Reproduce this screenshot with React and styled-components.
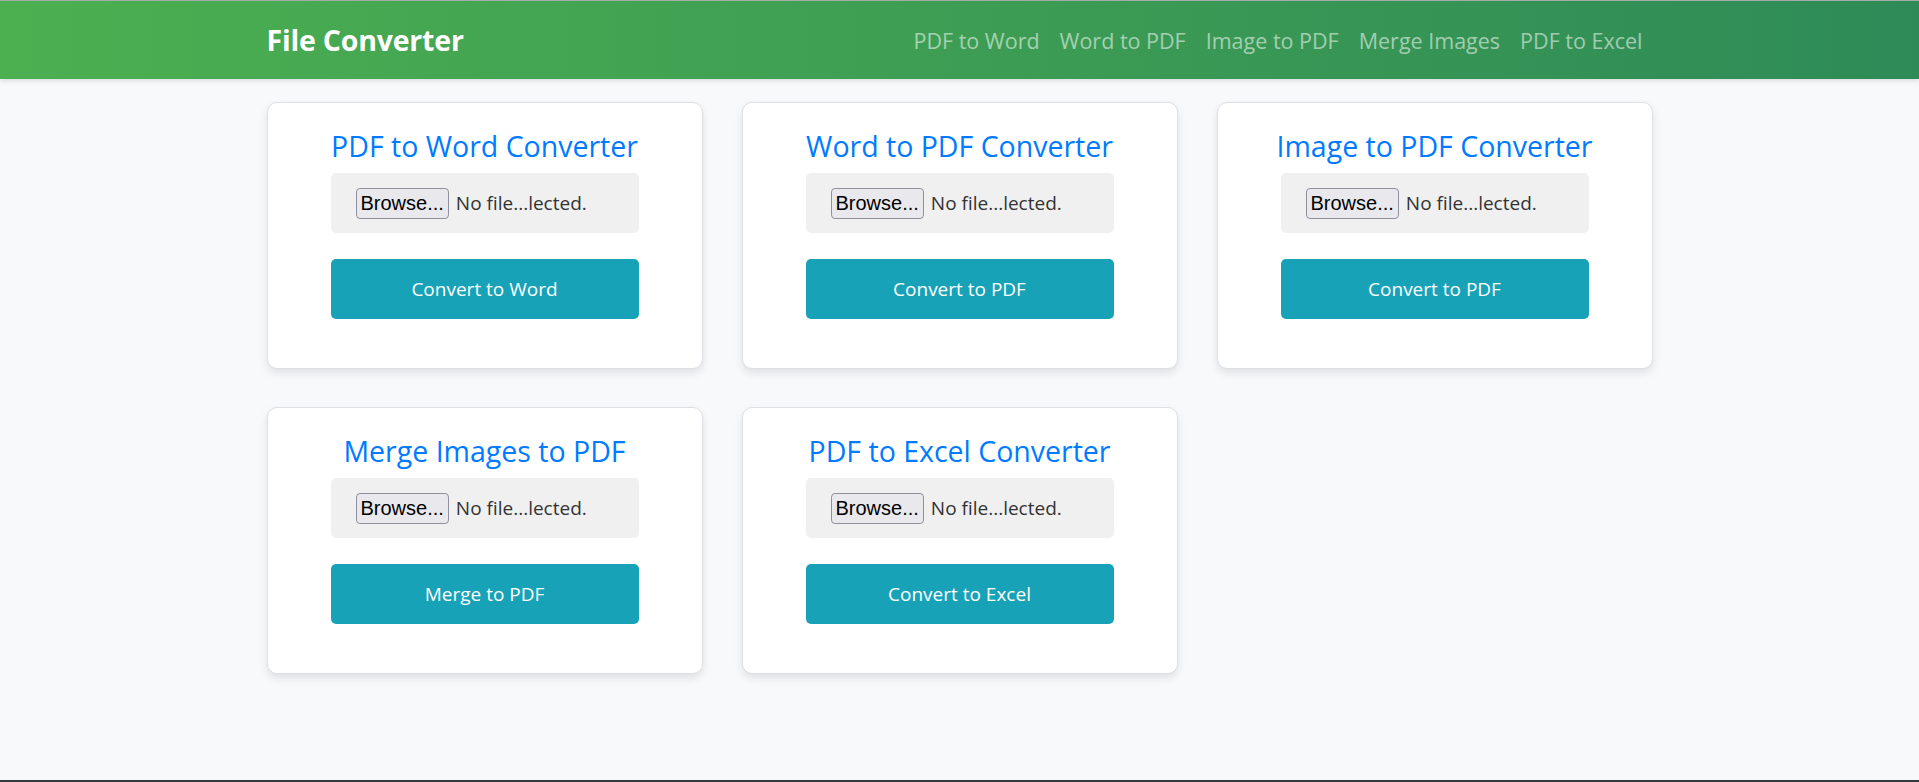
import React from "react";
import styled, { createGlobalStyle } from "styled-components";

const GlobalStyle = createGlobalStyle`
  body {
    margin: 0;
    background-color: #f8f9fa;
    font-family: "Open Sans", "Noto Sans", sans-serif;
    color: #212529;
  }
`;

const Header = styled.header`
  height: 78px;
  border-top: 1px solid #a9a9a9;
  background: linear-gradient(90deg, #4caf50, #2e8b57);
  box-shadow: 0 2px 5px rgba(0, 0, 0, 0.12);
  display: flex;
  justify-content: center;
`;

const HeaderInner = styled.div`
  width: 1386px;
  display: flex;
  justify-content: space-between;
  align-items: center;
`;

const Brand = styled.a`
  color: #fff;
  font-size: 28.5px;
  font-weight: 700;
  text-decoration: none;
  letter-spacing: -0.2px;
`;

const NavItems = styled.nav`
  display: flex;
  align-items: center;
`;

const NavLink = styled.a`
  color: rgba(255, 255, 255, 0.55);
  font-size: 21.5px;
  padding: 8px 10px;
  text-decoration: none;
`;

const Main = styled.main`
  width: 1386px;
  margin: 0 auto;
  padding: 23px 0 106px;
`;

const Grid = styled.div`
  display: grid;
  grid-template-columns: repeat(3, 436px);
  column-gap: 39px;
  row-gap: 38px;
`;

const Card = styled.section`
  box-sizing: border-box;
  height: 267px;
  background: #fff;
  border: 1px solid #dcdfe3;
  border-radius: 10px;
  box-shadow: 0 4px 8px rgba(0, 0, 0, 0.1);
  padding: 26px 63px 0;
  display: flex;
  flex-direction: column;
  align-items: center;
`;

const Title = styled.h3`
  margin: 0 0 10px;
  font-size: 28.5px;
  font-weight: 400;
  line-height: 1.2;
  color: #007bff;
  white-space: nowrap;
`;

const FileBox = styled.div`
  box-sizing: border-box;
  width: 100%;
  height: 60px;
  flex-shrink: 0;
  background: #f0f0f0;
  border-radius: 5px;
  display: flex;
  align-items: center;
  padding-left: 25px;
  gap: 7px;
`;

const BrowseButton = styled.button`
  height: 31px;
  padding: 0 4px;
  background: #e9e9ed;
  border: 1px solid #8f8f9d;
  border-radius: 4px;
  font-family: "Liberation Sans", Arial, sans-serif;
  font-size: 20px;
  color: #000;
`;

const FileName = styled.span`
  font-size: 19px;
  color: #333;
`;

const ActionButton = styled.button`
  width: 100%;
  height: 60px;
  flex-shrink: 0;
  margin-top: 26px;
  background: #17a2b8;
  border: none;
  border-radius: 5px;
  color: #fff;
  font-family: "Open Sans", "Noto Sans", sans-serif;
  font-size: 19px;
`;

const Footer = styled.footer`
  height: 60px;
  background: #343a40;
`;

const converters = [
  { title: "PDF to Word Converter", action: "Convert to Word" },
  { title: "Word to PDF Converter", action: "Convert to PDF" },
  { title: "Image to PDF Converter", action: "Convert to PDF" },
  { title: "Merge Images to PDF", action: "Merge to PDF" },
  { title: "PDF to Excel Converter", action: "Convert to Excel" },
];

const links = ["PDF to Word", "Word to PDF", "Image to PDF", "Merge Images", "PDF to Excel"];

const App = () => {
  return (
    <>
      <GlobalStyle />
      <Header>
        <HeaderInner>
          <Brand href="#">File Converter</Brand>
          <NavItems>
            {links.map((l) => (
              <NavLink key={l} href="#">
                {l}
              </NavLink>
            ))}
          </NavItems>
        </HeaderInner>
      </Header>
      <Main>
        <Grid>
          {converters.map((c) => (
            <Card key={c.title}>
              <Title>{c.title}</Title>
              <FileBox>
                <BrowseButton type="button">Browse...</BrowseButton>
                <FileName>No file...lected.</FileName>
              </FileBox>
              <ActionButton type="button">{c.action}</ActionButton>
            </Card>
          ))}
        </Grid>
      </Main>
      <Footer />
    </>
  );
};

export default App;
